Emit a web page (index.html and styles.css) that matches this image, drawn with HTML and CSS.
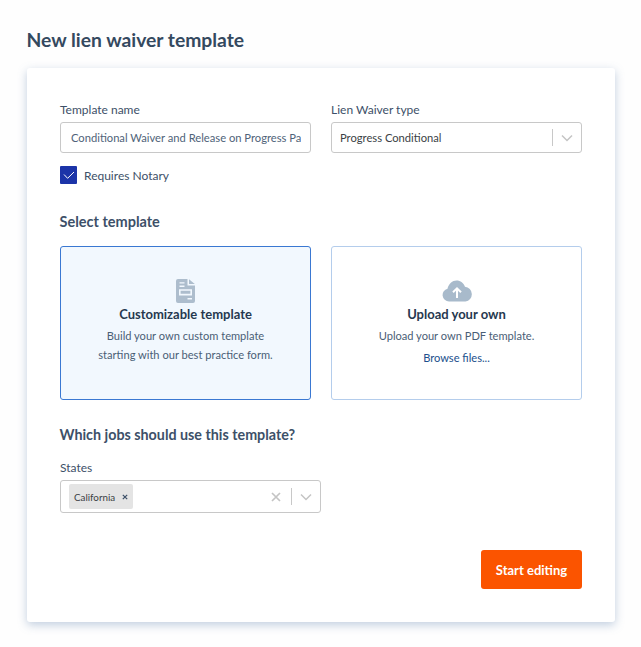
FILE: index.html
```html
<!DOCTYPE html>
<html lang="en">
<head>
<meta charset="utf-8">
<title>New lien waiver template</title>
<link rel="stylesheet" href="styles.css">
</head>
<body>
<main class="page">
  <h1 class="title">New lien waiver template</h1>
  <section class="panel">
    <div class="fields">
      <div class="field">
        <label class="label">Template name</label>
        <div class="input"><span class="input-text">Conditional Waiver and Release on Progress Pay</span></div>
      </div>
      <div class="field">
        <label class="label">Lien Waiver type</label>
        <div class="select">
          <span class="select-value">Progress Conditional</span>
          <span class="sep"></span>
          <svg class="chev" width="12" height="8" viewBox="0 0 12 8"><path d="M1 1.500l5 5 5-5" fill="none" stroke="#c4c4c4" stroke-width="1.500"/></svg>
        </div>
      </div>
    </div>
    <div class="check-row">
      <span class="checkbox"><svg width="12" height="10" viewBox="0 0 12 10"><path d="M1 4.500l3.600 3.800L11 2" fill="none" stroke="#fff" stroke-width="1"/></svg></span>
      <span class="check-label">Requires Notary</span>
    </div>
    <h2 class="section-a">Select template</h2>
    <div class="options">
      <div class="option selected">
        <svg class="icon" width="19" height="24" viewBox="0 0 19 24">
          <path d="M2 0h9.500v6.500H19V22a2 2 0 0 1-2 2H2a2 2 0 0 1-2-2V2a2 2 0 0 1 2-2z" fill="#adbdcd"/>
          <path d="M13 0.300L18.800 5H13z" fill="#adbdcd"/>
          <path d="M3.500 3.200h5v1.400h-5zM3.500 6.600h5v1.400h-5zM11.500 19h4.500v1.400h-4.500z" fill="#f2f8fe"/>
          <path d="M3.800 11h11.400v4.600H3.800z" fill="none" stroke="#f2f8fe" stroke-width="1.600"/>
        </svg>
        <div class="option-title">Customizable template</div>
        <p class="option-text">Build your own custom template<br>starting with our best practice form.</p>
      </div>
      <div class="option">
        <svg class="icon" width="30" height="22" viewBox="0 0 30 22">
          <path d="M7 21.500a6.500 6.500 0 0 1-1.500-12.800C6.500 4 10.500 .5 14.500 .5c4 0 7.300 2.500 8.500 6.300A7.400 7.400 0 0 1 23.500 21.500z" fill="#a8bacb"/>
          <path d="M15 18V8.500M11 12.300l4-4 4 4" fill="none" stroke="#fff" stroke-width="2"/>
        </svg>
        <div class="option-title">Upload your own</div>
        <p class="option-text">Upload your own PDF template.</p>
        <a class="browse">Browse files...</a>
      </div>
    </div>
    <h2 class="section-b">Which jobs should use this template?</h2>
    <label class="label">States</label>
    <div class="states">
      <span class="tag"><span class="tag-text">California</span><svg width="6" height="6" viewBox="0 0 6 6"><path d="M.8.8l4.400 4.400M5.200.8L.8 5.200" stroke="#3d5068" stroke-width="1.200"/></svg></span>
      <span class="spacer"></span>
      <svg class="clear" width="10" height="10" viewBox="0 0 10 10"><path d="M1 1l8 8M9 1l-8 8" stroke="#c4c4c4" stroke-width="1.700"/></svg>
      <span class="sep"></span>
      <svg class="chev" width="12" height="8" viewBox="0 0 12 8"><path d="M1 1.500l5 5 5-5" fill="none" stroke="#c4c4c4" stroke-width="1.500"/></svg>
    </div>
    <div class="actions"><button class="primary">Start editing</button></div>
  </section>
</main>
</body>
</html>
```

FILE: styles.css
```css
* { box-sizing: border-box; }
html, body { margin: 0; padding: 0; }
body {
  background: #fefefe;
  font-family: Lato, "Open Sans", sans-serif;
  color: #3d5068;
  width: 641px;
  height: 647px;
  overflow: hidden;
}
.page { padding: 28px 26px 0 27px; }
.title {
  margin: 0 0 16px -0.500px;
  font-size: 19.300px;
  line-height: 24px;
  font-weight: 700;
  color: #34495f;
}
.panel {
  height: 554px;
  background: #fff;
  border-radius: 3px;
  box-shadow: 0 3px 10px rgba(110, 140, 180, 0.42);
  padding: 32px 33px 0 33px;
}
.fields { display: flex; gap: 20px; }
.field { width: 251px; }
.label {
  display: block;
  font-size: 12px;
  line-height: 20px;
  color: #3d5068;
  margin-bottom: 2px;
}
.input, .select, .states {
  height: 31px;
  border: 1px solid #c8c8c8;
  border-radius: 3px;
  background: #fff;
  display: flex;
  align-items: center;
  font-size: 11.200px;
}
.input { padding: 0 0 0 10px; }
.input-text {
  display: block;
  width: 230px;
  overflow: hidden;
  white-space: nowrap;
  color: #4f6379;
}
.select { padding: 0 8px 0 8px; }
.select-value { flex: 1; color: #3b3f45; }
.sep { width: 1px; height: 17px; background: #c8c8c8; margin-right: 8px; }
.chev { flex: none; }
.check-row {
  display: flex;
  align-items: center;
  gap: 7px;
  margin-top: 13px;
  height: 18px;
}
.checkbox {
  width: 17px;
  height: 18px;
  background: #1c34a8;
  border-radius: 1px;
  display: flex;
  align-items: center;
  justify-content: center;
}
.check-label { font-size: 12px; color: #3d5068; }
.section-a {
  margin: 28px 0 14px -0.500px;
  font-size: 14.500px;
  line-height: 20px;
  font-weight: 700;
  color: #3d5068;
}
.options { display: flex; gap: 20px; }
.option {
  width: 251px;
  height: 154px;
  border: 1px solid #b4cdec;
  border-radius: 3px;
  background: #fff;
  display: flex;
  flex-direction: column;
  align-items: center;
  padding-top: 32px;
}
.option.selected { border-color: #3a78d2; background: #f2f8fe; }
.icon { display: block; height: 24px; flex: none; }
.option-title {
  margin-top: 1px;
  font-size: 13px;
  line-height: 20px;
  font-weight: 700;
  color: #26384f;
}
.option-text {
  margin: 2px 0 0;
  font-size: 11.100px;
  line-height: 19px;
  text-align: center;
  color: #4a5e76;
}
.browse {
  margin-top: 3px;
  font-size: 11.100px;
  line-height: 19px;
  color: #1c4f8c;
}
.section-b {
  margin: 25px 0 13px -0.500px;
  font-size: 14.300px;
  line-height: 20px;
  font-weight: 700;
  color: #3d5068;
}
.states {
  width: 261px;
  height: 33px;
  padding: 0 8px;
}
.tag {
  height: 25px;
  background: #e4e4e4;
  border-radius: 2px;
  display: flex;
  align-items: center;
  gap: 7px;
  padding: 0 5px;
  font-size: 9.800px;
  color: #3b3f45;
}
.spacer { flex: 1; }
.clear { margin-right: 10px; }
.actions { display: flex; justify-content: flex-end; margin-top: 37px; }
.primary {
  width: 101px;
  height: 39px;
  border: 0;
  border-radius: 3px;
  background: #fb5400;
  color: #fff;
  font-family: inherit;
  font-size: 13px;
  font-weight: 700;
}
```
